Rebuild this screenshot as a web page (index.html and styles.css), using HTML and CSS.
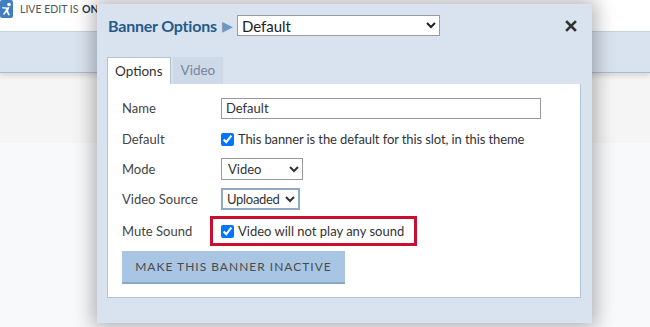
FILE: index.html
```html
<!DOCTYPE html>
<html lang="en">
<head>
    <meta charset="UTF-8">
    <meta name="viewport" content="width=device-width, initial-scale=1.0">
    <title>Banner Options</title>
    <link rel="stylesheet" href="styles.css">
</head>
<body>

    <!-- Site header behind the dialog -->
    <div class="page">
        <div class="topbar">
            <svg class="logo" width="13" height="18" viewBox="0 0 13 18">
                <rect x="0" y="0" width="13" height="18" rx="2" fill="#3f7fbf"/>
                <circle cx="9" cy="4.5" r="1.8" fill="#fff"/>
                <path d="M2 7 L7 7.5 L9.5 7 L8 11 L10 15 L8.5 15.5 L6.5 12 L4 15 L3 14 L5.5 10.5 L6 8.8 L2.5 8.5 Z" fill="#fff"/>
            </svg>
            <span class="live-edit">LIVE EDIT IS <b>ON</b></span>
        </div>
        <div class="navband"></div>
        <div class="graybar"></div>
        <div class="rest"></div>
    </div>

    <!-- Banner Options dialog -->
    <div class="dialog">
        <div class="dialog-header">
            <span class="dialog-title">Banner Options</span>
            <span class="crumb">&#9654;</span>
            <select class="title-select">
                <option>Default</option>
            </select>
            <svg class="close" width="12" height="12" viewBox="0 0 12 12">
                <path d="M2 2 L10 10 M10 2 L2 10" stroke="#333" stroke-width="2.6" stroke-linecap="square"/>
            </svg>
        </div>

        <div class="tabs">
            <div class="tab active">Options</div>
            <div class="tab">Video</div>
        </div>

        <div class="panel">
            <div class="row">
                <label>Name</label>
                <input type="text" class="text-input" value="Default">
            </div>
            <div class="row row-default">
                <label>Default</label>
                <span class="check"><input type="checkbox" checked> This banner is the default for this slot, in this theme</span>
            </div>
            <div class="row">
                <label>Mode</label>
                <select class="mode-select"><option>Video</option></select>
            </div>
            <div class="row">
                <label>Video Source</label>
                <select class="source-select"><option>Uploaded</option></select>
            </div>
            <div class="row row-mute">
                <label>Mute Sound</label>
                <span class="check highlight"><input type="checkbox" checked> Video will not play any sound</span>
            </div>
            <button class="inactive-btn">MAKE THIS BANNER INACTIVE</button>
        </div>
    </div>

</body>
</html>
```

FILE: styles.css
```css
    body {
        margin: 0;
        font-family: 'Lato', 'Open Sans', sans-serif;
        overflow: hidden;
        height: 327px;
    }

    /* Background page */
    .page {
        display: flex;
        flex-direction: column;
        height: 327px;
    }

    .topbar {
        height: 31px;
        background-color: white;
        display: flex;
        align-items: flex-start;
    }

    .logo {
        display: block;
    }

    .live-edit {
        margin-left: 7px;
        margin-top: 3px;
        font-size: 10.5px;
        color: #555;
    }

    .live-edit b {
        color: #1f3550;
        font-weight: bold;
        margin-left: 1px;
    }

    .navband {
        height: 40px;
        background-color: #d9e3ef;
        border-top: 1px solid #c9d3de;
        border-bottom: 1px solid #aebbcb;
        box-shadow: 0 3px 5px rgba(0, 0, 0, 0.12);
        position: relative;
    }

    .graybar {
        height: 70px;
        background-color: #f5f5f5;
    }

    .rest {
        flex: 1;
        background-color: #f8f9fb;
    }

    /* Dialog */
    .dialog {
        position: absolute;
        left: 97px;
        top: 4px;
        width: 495px;
        height: 319px;
        box-sizing: border-box;
        padding: 11px 11px 0 10px;
        background-color: #d9e3ef;
        box-shadow: 0 0 18px 4px rgba(0, 0, 0, 0.3);
    }

    .dialog-header {
        display: flex;
        align-items: center;
        height: 21px;
    }

    .dialog-title {
        margin-left: 1px;
        font-size: 16px;
        font-weight: bold;
        color: #245b8c;
        letter-spacing: -0.2px;
    }

    .crumb {
        margin: 0 4px 0 5px;
        font-size: 14px;
        color: #6f97c0;
    }

    .title-select {
        width: 203px;
        height: 21px;
        font-family: 'Lato', sans-serif;
        font-size: 15px;
        color: #222;
        background-color: white;
        border: 1px solid #9a9a9a;
        border-radius: 0;
    }

    .close {
        margin-left: auto;
        margin-right: 4px;
    }

    /* Tabs */
    .tabs {
        display: flex;
        gap: 2px;
        margin-top: 21px;
        height: 27px;
    }

    .tab {
        padding: 0 8px;
        line-height: 27px;
        font-size: 13.5px;
        color: #74879d;
        background-color: #cdd9e7;
    }

    .tab.active {
        padding: 0 7px;
        color: #333;
        background-color: white;
        border: 1px solid #b3c3d6;
        border-bottom: none;
        line-height: 26px;
    }

    .panel {
        background-color: white;
        border: 1px solid #b3c3d6;
        border-top: none;
        height: 214px;
        box-sizing: border-box;
        padding: 13px 14px 0 14px;
        display: flex;
        flex-direction: column;
        gap: 8px;
    }

    .row {
        display: flex;
        align-items: center;
        min-height: 22px;
        font-size: 13px;
        color: #444;
    }

    .row label {
        width: 99px;
        flex-shrink: 0;
    }

    .row-default {
        margin-top: 1px;
    }

    .row-mute {
        margin-top: -2px;
    }

    .text-input {
        width: 320px;
        height: 21px;
        box-sizing: border-box;
        border: 1px solid #999;
        padding: 0 4px;
        font-family: 'Lato', sans-serif;
        font-size: 13px;
        color: #333;
    }

    .check {
        display: flex;
        align-items: center;
        gap: 4px;
        font-size: 13px;
        color: #333;
    }

    .row-default .check {
        letter-spacing: -0.1px;
    }

    .check input {
        margin: 0;
        width: 13px;
        height: 13px;
    }

    .mode-select,
    .source-select {
        height: 22px;
        font-family: 'Lato', sans-serif;
        font-size: 13px;
        color: #333;
        background-color: white;
        border-radius: 0;
        padding: 0 0 0 2px;
    }

    .mode-select {
        width: 82px;
        border: 1px solid #999;
    }

    .source-select {
        width: 79px;
        border: 2px solid #8fa8c4;
        padding: 0;
        letter-spacing: -0.3px;
    }

    .highlight {
        margin-left: -11px;
        padding: 0 10px 0 8px;
        height: 24px;
        border: 3px solid #c8102e;
    }

    .inactive-btn {
        align-self: flex-start;
        margin-top: -3px;
        width: 223px;
        height: 33px;
        border: none;
        border-bottom: 2px solid #8aa9c9;
        background-color: #a8c6e4;
        color: #4b4b4b;
        font-family: 'Lato', sans-serif;
        font-size: 12px;
        letter-spacing: 1px;
        cursor: pointer;
    }
```
